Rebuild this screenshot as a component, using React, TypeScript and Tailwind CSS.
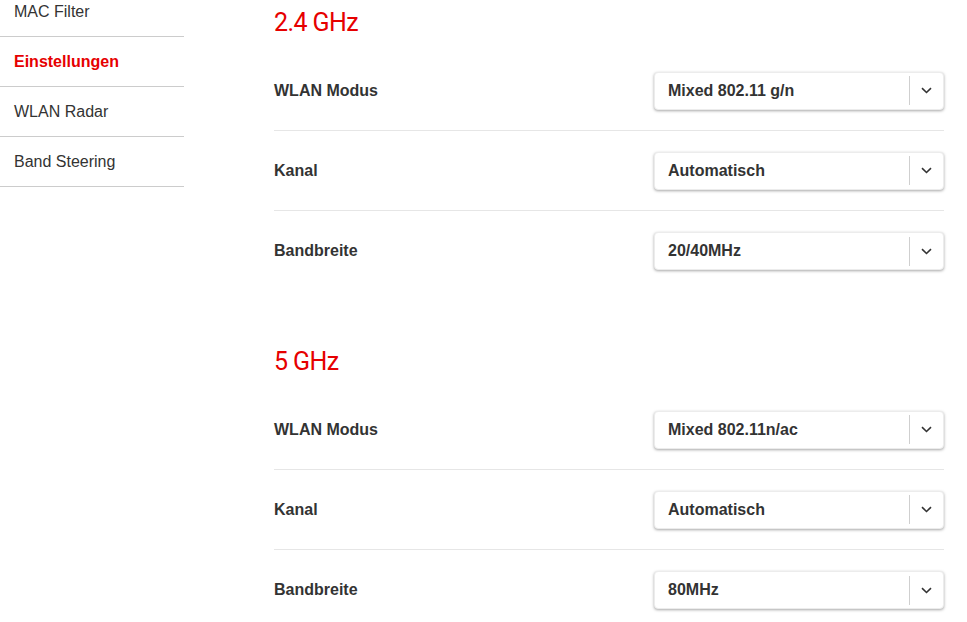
import React from 'react';

const navItems = [
  { label: 'MAC Filter', active: false },
  { label: 'Einstellungen', active: true },
  { label: 'WLAN Radar', active: false },
  { label: 'Band Steering', active: false },
];

const sections = [
  {
    title: '2.4 GHz',
    rows: [
      { label: 'WLAN Modus', value: 'Mixed 802.11 g/n' },
      { label: 'Kanal', value: 'Automatisch' },
      { label: 'Bandbreite', value: '20/40MHz' },
    ],
  },
  {
    title: '5 GHz',
    rows: [
      { label: 'WLAN Modus', value: 'Mixed 802.11n/ac' },
      { label: 'Kanal', value: 'Automatisch' },
      { label: 'Bandbreite', value: '80MHz' },
    ],
  },
];

const Chevron: React.FC = () => (
  <svg width="11" height="7" viewBox="0 0 11 7" fill="none">
    <path d="M1 1.2 L5.5 5.5 L10 1.2" stroke="#333" strokeWidth="1.6" />
  </svg>
);

const Select: React.FC<{ value: string }> = ({ value }) => (
  <div className="w-[290px] h-[38px] flex items-center bg-white rounded-[4px] border border-[#ececec] shadow-[0_1px_3px_rgba(0,0,0,0.35)]">
    <div className="flex-1 pl-[13px] text-[16px] font-bold text-[#333]">{value}</div>
    <div className="w-px h-[29px] bg-[#cfcfcf]" />
    <div className="w-[33px] flex items-center justify-center">
      <Chevron />
    </div>
  </div>
);

export default function App() {
  return (
    <div className="w-[967px] h-[622px] overflow-hidden bg-white flex font-['Liberation_Sans',Arial,sans-serif] text-[#333]">
      <div className="w-[184px] shrink-0 -mt-[13px]">
        {navItems.map(item => (
          <div
            key={item.label}
            className={`h-[50px] flex items-center pl-[14px] border-b border-[#cccccc] text-[16px] ${
              item.active ? 'font-bold text-[#e60000]' : 'text-[#333]'
            }`}
          >
            {item.label}
          </div>
        ))}
      </div>

      <div className="ml-[90px] w-[670px]">
        {sections.map((section, si) => (
          <div key={section.title} className={si > 0 ? 'mt-[48px]' : ''}>
            <div className="h-[51px] pt-[8px]">
              <h2 className="font-['Roboto',sans-serif] text-[25px] leading-[30px] tracking-[-0.6px] font-normal text-[#e60000]">
                {section.title}
              </h2>
            </div>
            {section.rows.map((row, ri) => (
              <div
                key={row.label}
                className={`h-[80px] flex items-center justify-between ${
                  ri < section.rows.length - 1 ? 'border-b border-[#e6e6e6]' : ''
                }`}
              >
                <span className="text-[16px] font-bold text-[#333]">{row.label}</span>
                <Select value={row.value} />
              </div>
            ))}
          </div>
        ))}
      </div>
    </div>
  );
}
